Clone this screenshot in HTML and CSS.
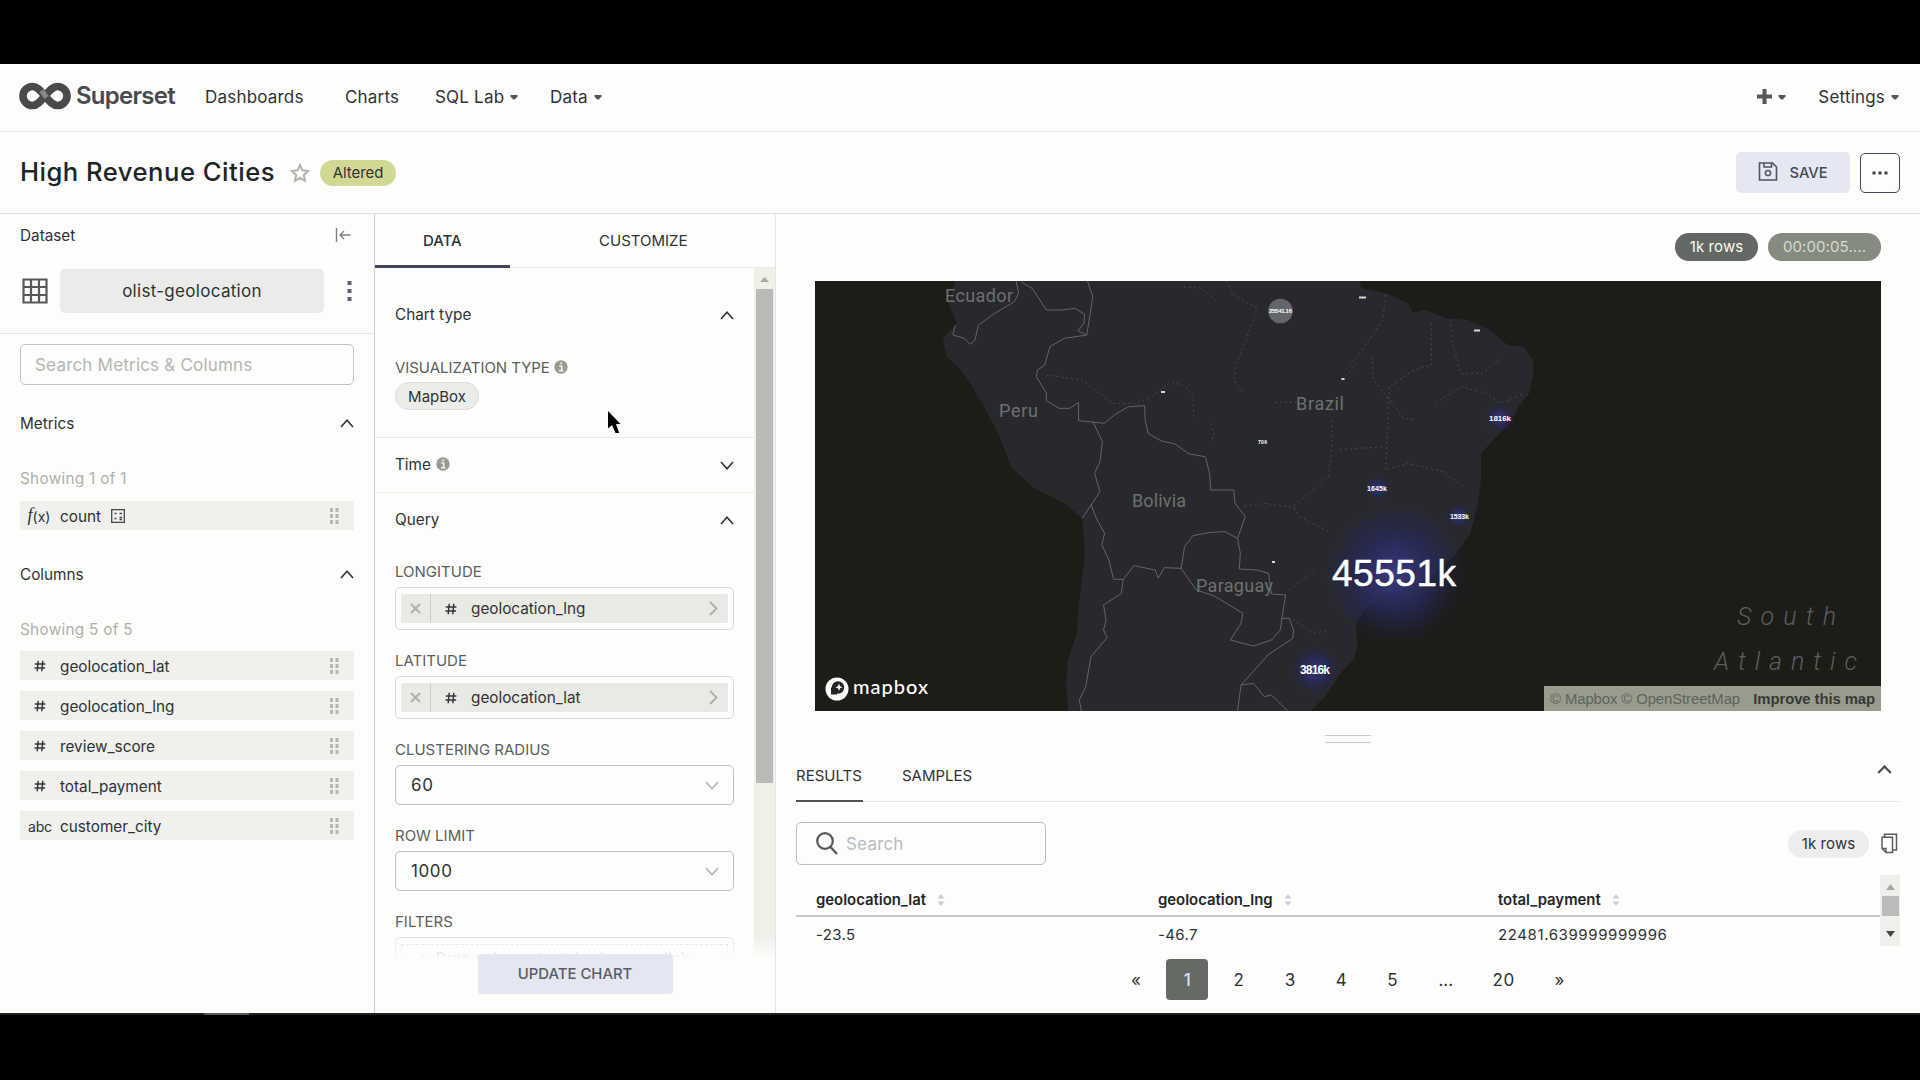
FILE: index.html
```html
<!DOCTYPE html>
<html lang="en">
<head>
<meta charset="utf-8">
<title>High Revenue Cities</title>
<link rel="stylesheet" href="styles.css">
</head>
<body>
<svg class="defs" width="0" height="0">
  <symbol id="up" viewBox="0 0 14 9"><path d="M1 8 7 1.3 13 8" fill="none" stroke="currentColor" stroke-width="1.6"/></symbol>
  <symbol id="down" viewBox="0 0 14 9"><path d="M1 1 7 7.7 13 1" fill="none" stroke="currentColor" stroke-width="1.6"/></symbol>
  <symbol id="caret" viewBox="0 0 8 5"><path d="M.5 0h7v1.6L4.8 4.6H3.2L.5 1.6z" fill="currentColor"/></symbol>
  <symbol id="grip" viewBox="0 0 9 16"><path d="M0 0h3v4H0zM5.5 0h3v4h-3zM0 6h3v4H0zM5.5 6h3v4h-3zM0 12h3v4H0zM5.5 12h3v4h-3z" fill="#b3b8b0"/></symbol>
  <symbol id="info" viewBox="0 0 14 14"><circle cx="7" cy="7" r="6.7" fill="#969c8e"/><path d="M5.2 6h2.5v4.5M5 10.7h4.3M6.3 3.2h1.8" fill="none" stroke="#f4f5f2" stroke-width="1.5"/></symbol>
  <symbol id="hash" viewBox="0 0 12 12"><path d="M4.2.8 3.2 11.2M8.8.8 7.8 11.2M.8 3.9h10.6M.5 8h10.6" fill="none" stroke="#33363a" stroke-width="1.5"/></symbol>
  <symbol id="sort" viewBox="0 0 8 12"><path d="M4 0 7.5 4.5h-7zM4 12 .5 7.5h7z" fill="#c9ccd4"/></symbol>
</svg>
<div class="app">
  <nav class="nav">
    <a class="brand">
      <svg width="52" height="28" viewBox="0 0 52 28"><path d="M26 14C21 8 18 4.5 13.500 4.500a9.500 9.500 0 0 0 0 19C18 23.500 21 20 26 14S34 4.500 38.500 4.500a9.500 9.500 0 0 1 0 19C34 23.500 31 20 26 14z" fill="none" stroke="#484a4c" stroke-width="7.600"/><path d="M22.500 8.500 27.500 15.500" stroke="#85878a" stroke-width="5"/></svg>
      <span class="brand-name">Superset</span>
    </a>
    <span class="nav-item dash">Dashboards</span>
    <span class="nav-item charts">Charts</span>
    <span class="nav-item sql">SQL Lab <svg width="8" height="5"><use href="#caret"/></svg></span>
    <span class="nav-item data">Data <svg width="8" height="5"><use href="#caret"/></svg></span>
    <span class="nav-item plus"><svg class="cross" width="15" height="15" viewBox="0 0 15 15"><path d="M7.500 0v15M0 7.500h15" stroke="#56595c" stroke-width="4"/></svg><svg width="8" height="5"><use href="#caret"/></svg></span>
    <span class="nav-item settings">Settings <svg width="8" height="5"><use href="#caret"/></svg></span>
  </nav>
  <header class="title-bar">
    <h1>High Revenue Cities</h1>
    <svg class="star" width="20" height="20" viewBox="0 0 20 20"><path d="M10 2 12.400 7.300 18.200 8 13.900 11.900 15 17.800 10 14.900 5 17.800 6.100 11.900 1.800 8 7.600 7.300z" fill="none" stroke="#b0b5aa" stroke-width="2"/></svg>
    <span class="altered">Altered</span>
    <button class="save"><svg width="20" height="19" viewBox="0 0 20 19"><path d="M1.500 1h13l4 4v13h-17zM6 1v4h7.500V1" fill="none" stroke="#52555c" stroke-width="1.600"/><circle cx="10" cy="11" r="2.600" fill="none" stroke="#52555c" stroke-width="1.500"/></svg>SAVE</button>
    <button class="more"><svg width="16" height="4" viewBox="0 0 16 4"><path d="M.5.5h3v3h-3zM6.500.5h3v3h-3zM12.500.5h3v3h-3z" fill="#3d3f4c"/></svg></button>
  </header>
  <main class="work">
    <aside class="source">
      <div class="source-top">
        <div class="dataset-head"><span>Dataset</span><svg width="16" height="14" viewBox="0 0 16 14"><path d="M1.500 0v14M15.500 7H5M9 3 5 7l4 4" fill="none" stroke="#80828f" stroke-width="1.400"/></svg></div>
        <div class="dataset-row">
          <svg width="26" height="26" viewBox="0 0 26 26"><path d="M1.500 1.500h23v23h-23zM9 1v24M17 1v24M1 9h24M1 17h24" fill="none" stroke="#56595b" stroke-width="2.200"/></svg>
          <span class="dataset-name">olist-geolocation</span>
          <svg class="kebab" width="5" height="22" viewBox="0 0 5 22"><path d="M.5 1h4v4h-4zM.5 9h4v4h-4zM.5 17h4v4h-4z" fill="#5b5d6c"/></svg>
        </div>
      </div>
      <div class="source-search">Search Metrics &amp; Columns</div>
      <div class="fold">Metrics<svg width="14" height="9"><use href="#up"/></svg></div>
      <div class="showing">Showing 1 of 1</div>
      <ul class="fields one">
        <li><span class="kind fx"><i>f</i>(x)</span><span>count</span><svg class="calc" width="14" height="14" viewBox="0 0 14 14"><path d="M.7.7h12.600v12.600H.7z" fill="none" stroke="#44474a" stroke-width="1.300"/><path d="M3.500 4.500h2M8.500 4.500h2.500M3.500 9.500h2M8.500 8.500h2.500M8.500 10.500h2.500" stroke="#44474a" stroke-width="1.400"/></svg><svg class="grip" width="9" height="16"><use href="#grip"/></svg></li>
      </ul>
      <div class="fold second">Columns<svg width="14" height="9"><use href="#up"/></svg></div>
      <div class="showing">Showing 5 of 5</div>
      <ul class="fields">
        <li><span class="kind"><svg width="12" height="12"><use href="#hash"/></svg></span><span>geolocation_lat</span><svg class="grip" width="9" height="16"><use href="#grip"/></svg></li>
        <li><span class="kind"><svg width="12" height="12"><use href="#hash"/></svg></span><span>geolocation_lng</span><svg class="grip" width="9" height="16"><use href="#grip"/></svg></li>
        <li><span class="kind"><svg width="12" height="12"><use href="#hash"/></svg></span><span>review_score</span><svg class="grip" width="9" height="16"><use href="#grip"/></svg></li>
        <li><span class="kind"><svg width="12" height="12"><use href="#hash"/></svg></span><span>total_payment</span><svg class="grip" width="9" height="16"><use href="#grip"/></svg></li>
        <li><span class="kind abc">abc</span><span>customer_city</span><svg class="grip" width="9" height="16"><use href="#grip"/></svg></li>
      </ul>
    </aside>
    <section class="controls">
      <div class="tabs"><span class="tab active">DATA</span><span class="tab wide">CUSTOMIZE</span></div>
      <div class="scroller">
        <div class="panel">
          <div class="section first">
            <div class="section-head">Chart type<svg width="14" height="9"><use href="#up"/></svg></div>
            <label class="viz">VISUALIZATION TYPE<svg width="14" height="14"><use href="#info"/></svg></label>
            <span class="viz-pill">MapBox</span>
          </div>
          <div class="section time">
            <div class="section-head"><span>Time<svg class="tip" width="14" height="14"><use href="#info"/></svg></span><svg width="14" height="9"><use href="#down"/></svg></div>
          </div>
          <div class="section query">
            <div class="section-head">Query<svg width="14" height="9"><use href="#up"/></svg></div>
            <label class="long">LONGITUDE</label>
            <div class="drop"><div class="chip"><span class="x"><svg width="11" height="11" viewBox="0 0 11 11"><path d="M1 1l9 9M10 1 1 10" stroke="#adb2ab" stroke-width="2"/></svg></span><svg class="h" width="12" height="12"><use href="#hash"/></svg><span>geolocation_lng</span><svg class="go" width="9" height="15" viewBox="0 0 9 15"><path d="M1 1l6.500 6.500L1 14" fill="none" stroke="#adb2ab" stroke-width="2"/></svg></div></div>
            <label>LATITUDE</label>
            <div class="drop"><div class="chip"><span class="x"><svg width="11" height="11" viewBox="0 0 11 11"><path d="M1 1l9 9M10 1 1 10" stroke="#adb2ab" stroke-width="2"/></svg></span><svg class="h" width="12" height="12"><use href="#hash"/></svg><span>geolocation_lat</span><svg class="go" width="9" height="15" viewBox="0 0 9 15"><path d="M1 1l6.500 6.500L1 14" fill="none" stroke="#adb2ab" stroke-width="2"/></svg></div></div>
            <label>CLUSTERING RADIUS</label>
            <div class="select">60<svg width="14" height="9"><use href="#down"/></svg></div>
            <label>ROW LIMIT</label>
            <div class="select">1000<svg width="14" height="9"><use href="#down"/></svg></div>
            <label>FILTERS</label>
            <div class="drop filters"><div class="ghost">+&nbsp; Drop columns/metrics here or click</div></div>
          </div>
        </div>
        <div class="bar"><svg width="9" height="5" viewBox="0 0 9 5"><path d="M4.500 0 9 5H0z" fill="#a5aa9d"/></svg><span class="thumb"></span></div>
      </div>
      <footer class="run"><button>UPDATE CHART</button></footer>
    </section>
    <section class="chart">
      <div class="badges"><span class="rows">1k rows</span><span class="timer">00:00:05....</span></div>
      <div class="map">
        <svg class="terrain" viewBox="42 33 2985 1290" preserveAspectRatio="none">
          <path class="land" d="M435 33 415 100 440 160 400 205 410 260 450 300 480 345 520 420 560 500 590 590 650 650 740 700 790 745 798 850 790 930 780 1010 775 1090 750 1170 745 1240 750 1323H1430L1470 1280 1517 1205 1550 1170 1560 1130 1557 1060 1580 1020 1620 985 1690 960 1760 925 1830 860 1877 790 1897 710 1907 630 1907 550 1942 510 1987 460 2012 410 2042 370 2054 310 2052 270 2025 230 1982 225 1932 180 1872 150 1812 145 1752 120 1717 128 1702 100 1642 70 1572 55 1567 33z"/>
          <g class="state"><path d="M690 315 790 330 875 400 940 400 980 382 1040 335 1080 350 1102 380V450M1075 50l50 5 40 40M1195 33 1215 75 1280 115 1245 220 1220 290 1215 330 1240 370M1245 710 1300 700 1380 712 1400 740 1480 785M1150 460 1160 490 1150 520M1490 450V530L1480 620 1380 712M1330 397H1390M1560 280 1512 340M1512 540 1560 535 1640 530M1640 75 1632 150 1540 290M1602 260 1605 330 1660 400 1690 445 1720 448M1768 160V285L1720 300 1650 350 1640 600 1700 580 1800 605 1860 650M1820 150 1830 230 1850 310 1910 310 1960 265M1780 400 1850 350 1920 370 1960 400 2030 370M1440 900l-70 60M1380 1050 1440 1090 1480 1080"/></g>
          <path class="border" d="M605 33 612 70 600 95 545 130 500 165 490 210 477 223 460 205 428 195 435 165M620 36 650 55 690 120 730 120 770 115 797 133 795 160 778 182 803 195 820 80 805 33M803 195 740 205 700 230 685 285 665 300 662 320 690 370 690 392 725 415 755 415 780 398V452L852 460 880 435 920 410 965 407 967 455 975 490 1010 512 1050 522 1090 552 1135 560 1147 610 1150 660H1215L1218 700 1247 740 1225 805 1190 785 1150 787 1100 797 1077 830 1067 895 1020 893 1003 925 995 900 935 887 905 928H878L865 870 845 825 853 790 830 745 815 705 790 745M815 705 840 665 825 610 840 575 847 515 820 455M905 928 900 970 850 1005 857 1050 850 1080 860 1103 815 1160 800 1250 782 1290 788 1323M1067 895 1110 960 1160 978 1240 1030 1235 1060 1205 1110 1270 1128 1320 1110 1345 1080 1350 1040 1360 975 1320 972 1312 910 1280 900 1230 897 1233 850 1225 805M1350 1045 1370 1045 1382 1080 1380 1105 1310 1155 1235 1245 1225 1323M1235 1245 1270 1240 1300 1280 1320 1275 1366 1323"/>
        </svg>
        <svg class="marks" viewBox="0 0 1066 430">
          <defs>
            <radialGradient id="glow"><stop offset="0" stop-color="#3a3d86" stop-opacity=".9"/><stop offset=".45" stop-color="#2a2c66" stop-opacity=".75"/><stop offset="1" stop-color="#20214e" stop-opacity="0"/></radialGradient>
          </defs>
          <circle cx="580" cy="293" r="72" fill="url(#glow)"/>
          <circle cx="500" cy="389" r="24" fill="url(#glow)"/>
          <circle cx="685" cy="137" r="15" fill="url(#glow)"/>
          <circle cx="562" cy="207" r="13" fill="url(#glow)"/>
          <circle cx="644" cy="235" r="13" fill="url(#glow)"/>
          <circle cx="465.500" cy="30" r="12.300" fill="#63666a"/>
          <g class="place">
            <text x="130" y="21" textLength="68">Ecuador</text>
            <text x="184" y="136" textLength="39">Peru</text>
            <text x="481" y="128.500" textLength="48">Brazil</text>
            <text x="317" y="225.500" textLength="54">Bolivia</text>
            <text x="381" y="310.500" textLength="77">Paraguay</text>
          </g>
          <g class="sea">
            <text x="922" y="344" textLength="99">South</text>
            <text x="899" y="389" textLength="143">Atlantic</text>
          </g>
          <g class="count">
            <text x="517" y="304.500" font-size="37" textLength="124" stroke="#fff" stroke-width=".5">45551k</text>
            <text x="485" y="393" font-size="12" font-weight="700" textLength="30">3816k</text>
            <text x="674" y="140" font-size="8" font-weight="700" textLength="22">1816k</text>
            <text x="552" y="210" font-size="7" font-weight="700" textLength="20">1645k</text>
            <text x="635" y="238" font-size="7" font-weight="700" textLength="19">1533k</text>
            <text x="454" y="32" font-size="6" font-weight="700" textLength="23">25541.16</text>
            <text x="443" y="162.500" font-size="5" font-weight="700" textLength="9">706</text>
          </g>
          <path d="M346 111h4M526.500 98h3M457 281h3M544 16.500h7M659 49.500h6" stroke="#d5d8cf" stroke-width="2"/>
          <circle cx="22" cy="408" r="11.500" fill="#fff"/><circle cx="23" cy="406.500" r="6.200" fill="#23241f"/><path d="M16 413.500v-7h6v7z" fill="#23241f"/><path d="M24 402.500l1 2.700 2.700 1-2.700 1-1 2.700-1-2.700-2.700-1 2.700-1z" fill="#fff"/>
          <text class="wordmark" x="38" y="413" textLength="75">mapbox</text>
        </svg>
        <div class="credit"><span>© Mapbox</span><span>© OpenStreetMap</span><b>Improve this map</b></div>
      </div>
      <div class="handle"></div>
      <div class="results">
        <div class="result-tabs"><span class="rtab active">RESULTS</span><span class="rtab">SAMPLES</span><svg width="15" height="9" viewBox="0 0 15 9"><path d="M1.200 8 7.500 1.500 13.800 8" fill="none" stroke="#4b4e50" stroke-width="2.200"/></svg></div>
        <div class="tools">
          <div class="find"><svg width="22" height="23" viewBox="0 0 22 23"><circle cx="9" cy="9" r="7.800" fill="none" stroke="#56595b" stroke-width="2.200"/><path d="M14.500 15 21 22" stroke="#56595b" stroke-width="2.400"/></svg>Search</div>
          <span class="count-pill">1k rows</span>
          <svg class="copy" width="17" height="21" viewBox="0 0 17 21"><path d="M1 4.200h10.500V19.500H5L1 15.500zM1 15.500H5v4M3.500 4V1.200H15.500V17H12" fill="none" stroke="#5a5d5f" stroke-width="1.500"/></svg>
        </div>
        <div class="grid">
          <div class="rows-area">
            <div class="tr th"><span>geolocation_lat<svg width="8" height="12"><use href="#sort"/></svg></span><span>geolocation_lng<svg width="8" height="12"><use href="#sort"/></svg></span><span>total_payment<svg width="8" height="12"><use href="#sort"/></svg></span></div>
            <div class="tr td"><span>-23.5</span><span>-46.7</span><span class="money">22481.639999999996</span></div>
          </div>
          <div class="mini-bar"><svg width="9" height="6" viewBox="0 0 9 6"><path d="M4.500 0 9 6H0z" fill="#a5aa9d"/></svg><span></span><svg width="9" height="6" viewBox="0 0 9 6"><path d="M0 0h9L4.500 6z" fill="#44474a"/></svg></div>
        </div>
        <div class="pager"><span class="arrow">«</span><span class="on">1</span><span>2</span><span>3</span><span>4</span><span>5</span><span class="dots">...</span><span class="last">20</span><span class="arrow">»</span></div>
      </div>
    </section>
  </main>
</div>
<div class="status"><span></span></div>
<svg class="cursor" width="14" height="24" viewBox="0 0 14 24"><path d="M0 0v17.500l4-3.500 3.500 8h3.700L8 13h4.500z" fill="#000"/></svg>
</body>
</html>
```
FILE: styles.css
```css
* { box-sizing: border-box; }
body { margin: 0; background: #000; width: 1920px; height: 1080px; overflow: hidden; font-family: Inter, "Liberation Sans", sans-serif; font-size: 15.3px; color: #2f3235; padding-top: 64px; }
svg { flex: none; display: block; }
.defs { position: absolute; }
button { font: inherit; color: inherit; border: 0; padding: 0; }
ul { list-style: none; margin: 0; padding: 0; }
.app { height: 949px; background: #fdfdfb; display: flex; flex-direction: column; }

.nav { height: 68px; border-bottom: 1px solid #e6e7ec; display: flex; align-items: center; padding: 0 21px 2px 19px; font-size: 17px; letter-spacing: .2px; flex: none; }
.brand { display: flex; align-items: center; width: 186px; gap: 5px; }
.brand svg { margin-top: -2px; }
.brand-name { font-weight: 600; font-size: 24px; letter-spacing: -.75px; color: #484a4d; margin-top: -2px; }
.nav-item { display: flex; align-items: center; gap: 6px; color: #2f3235; }
.nav-item svg { color: #56595c; margin-top: 2px; }
.nav-item svg.cross { margin-top: 0; }
.dash { width: 140px; }
.charts { width: 90px; }
.sql { width: 115px; }
.plus { margin-left: auto; margin-right: 32px; }

.title-bar { height: 82px; border-bottom: 1px solid #e0e1e8; display: flex; align-items: center; padding: 0 20px; flex: none; }
h1 { margin: 0; font-size: 25.6px; font-weight: 500; width: 270px; letter-spacing: .5px; color: #202327; white-space: nowrap; padding-bottom: 2px; }
.star { margin-right: 10px; }
.altered { background: #d3d794; height: 26px; line-height: 26px; border-radius: 13px; width: 76px; text-align: center; font-size: 14.9px; }
.save { margin-left: auto; width: 114px; height: 41px; background: #e5e7f2; border-radius: 5px; display: flex; align-items: center; justify-content: center; gap: 11px; font-size: 14.7px; font-weight: 500; color: #464957; }
.save svg { margin-top: -2px; }
.more { width: 40px; height: 40px; margin-left: 10px; border: 1.5px solid #45475a; border-radius: 5px; background: none; display: grid; place-items: center; }

.work { flex: 1; display: flex; min-height: 0; }
.source { width: 375px; border-right: 1px solid #cbced4; flex: none; }
.source-top { height: 120px; border-bottom: 1px solid #e3e4ea; padding: 11px 0 0 20px; }
.dataset-head { display: flex; align-items: center; justify-content: space-between; height: 20px; padding-right: 23px; }
.dataset-row { display: flex; align-items: center; margin: 24px 22px 0 2px; height: 44px; }
.dataset-name { width: 264px; height: 44px; line-height: 44px; margin-left: 12px; background: #ebecea; border-radius: 5px; text-align: center; font-size: 17px; letter-spacing: .3px; }
.kebab { margin-left: auto; }
.source-search { margin: 10px 20px 0; height: 41px; line-height: 40px; border: 1px solid #c0c4c8; border-radius: 5px; padding-left: 14px; font-size: 17px; letter-spacing: .2px; color: #b3b8b2; }
.fold { margin: 23px 20px 0 20px; height: 30px; display: flex; align-items: center; justify-content: space-between; }
.fold.second { margin-top: 30px; }
.showing { margin: 31px 0 0 20px; height: 20px; line-height: 20px; color: #adb2a9; letter-spacing: .3px; }
.fields { margin: 11px 20px 0 20px; display: flex; flex-direction: column; gap: 11px; }
.fields.one { margin-top: 12px; }
.fields li { height: 29px; background: #f0f0ed; display: flex; align-items: center; padding: 1px 15px 0 0; }
.fields.one + .fold { margin-top: 29px; }
.kind { width: 40px; display: flex; justify-content: center; }
.fx { font-size: 14px; padding-right: 2px; }
.fx i { font: italic 18px/14px "Liberation Serif", serif; }
.abc { font-size: 14px; letter-spacing: -.2px; }
.calc { margin-left: 10px; }
.grip { margin-left: auto; }

.controls { width: 401px; border-right: 1px solid #e4e5ea; display: flex; flex-direction: column; flex: none; }
.tabs { height: 54px; border-bottom: 1px solid #e8e9ef; display: flex; flex: none; }
.tab { width: 135px; text-align: center; line-height: 53px; height: 54px; font-size: 15px; }
.tab.active { border-bottom: 3px solid #43455a; font-weight: 500; }
.tab.wide { width: 266px; padding-left: 2px; }
.scroller { flex: 1; display: flex; position: relative; overflow: hidden; min-height: 0; }
.scroller::after { content: ""; position: absolute; left: 0; right: 0; bottom: 0; height: 26px; background: linear-gradient(rgba(253,253,251,0), #fdfdfb); }
.panel { width: 379px; height: 0; }
.section { padding: 0 20px; border-bottom: 1px solid #e8e9ef; }
.section-head { display: flex; align-items: center; justify-content: space-between; height: 30px; }
.section-head span { display: flex; align-items: center; gap: 5px; }
.section .section-head > svg { margin-top: 2px; }
.first { padding-top: 31px; height: 170px; }
.time { height: 55px; padding-top: 11px; border-color: #eeefdc; }
.query { padding-top: 11px; }
label { display: flex; align-items: center; height: 20px; margin-top: 21px; padding-bottom: 1px; color: #5b5e5f; font-size: 15px; gap: 4px; }
label.viz { margin-top: 28px; padding: 0; letter-spacing: -.05px; }
label.long { margin-top: 28px; }
.viz-pill { display: block; margin-top: 5px; width: 84px; height: 28px; line-height: 27px; border: 1px solid #d9dbd9; border-radius: 14px; background: #ecede8; text-align: center; font-size: 15px; }
.drop { margin-top: 5px; height: 43px; width: 339px; border: 1px solid #d7d9dd; border-radius: 5px; padding: 6px 5px; }
.chip { height: 29px; background: #e9eae4; border-radius: 2px; display: flex; align-items: center; padding-right: 10px; }
.x { width: 30px; height: 29px; border-right: 1px solid #c9ccc9; display: grid; place-items: center; }
.h { margin: 0 14px 0 14px; }
.go { margin-left: auto; }
.select { margin-top: 5px; height: 40px; width: 339px; border: 1px solid #b9bdc4; border-radius: 5px; display: flex; align-items: center; justify-content: space-between; padding: 0 14px 0 15px; font-size: 17px; letter-spacing: .6px; }
.select svg { color: #b0b4b8; }
.filters { height: 60px; border-color: #dcdde4; }
.ghost { border: 1px dashed #d8dae2; height: 30px; line-height: 28px; color: #a9acae; padding-left: 15px; }
.bar { width: 21px; background: #f0f0e9; display: flex; flex-direction: column; align-items: center; padding-top: 9px; }
.thumb { width: 17px; height: 494px; margin-top: 7px; background: #b8bcb4; }
.run { height: 53px; flex: none; display: flex; justify-content: center; position: relative; }
.run button { width: 195px; height: 40px; margin-top: -6px; background: #e4e6f1; border-radius: 4px; font-weight: 500; color: #5a5d63; font-size: 14.9px; }

.chart { flex: 1; display: flex; flex-direction: column; min-width: 0; }
.badges { height: 67px; display: flex; justify-content: flex-end; align-items: center; gap: 10px; padding: 0 39px 1px 0; flex: none; }
.badges span { height: 28px; line-height: 28px; border-radius: 14px; text-align: center; font-size: 15px; letter-spacing: .1px; }
.badges .rows { width: 83px; background: #646864; color: #fbfbe8; }
.badges .timer { width: 113px; background: #868b80; color: #d8dacb; }
.map { position: relative; margin: 0 39px; height: 430px; background: #1c1d17; flex: none; overflow: hidden; }
.terrain, .marks { position: absolute; left: 0; top: 0; width: 1066px; height: 430px; }
.land { fill: #28292e; }
.border, .state path { fill: none; vector-effect: non-scaling-stroke; stroke-linejoin: round; }
.border { stroke: #636562; stroke-width: 1; }
.state path { stroke: #474945; stroke-width: 1; stroke-dasharray: 2 3; }
.place { font: 400 18px Roboto, sans-serif; fill: #6e706f; }
.sea { font: italic 300 25px Roboto, sans-serif; fill: #5b5e60; }
.count { font-family: "Liberation Sans", sans-serif; fill: #fff; }
.wordmark { font: 500 20px Lato, sans-serif; fill: #fff; }
.credit { position: absolute; right: 0; bottom: 0; width: 337px; height: 25px; line-height: 26px; padding: 0 6px; display: flex; gap: 4px; background: #989c8d; color: #5f635f; font-family: "Liberation Sans", sans-serif; font-size: 14.9px; white-space: nowrap; letter-spacing: -.1px; }
.credit b { color: #373936; margin-left: auto; }
.handle { width: 46px; height: 8px; border: solid #c8cbd0; border-width: 1px 0; margin: 24px auto 0; flex: none; }
.results { padding: 0 20px; }
.result-tabs { margin-top: 8px; height: 51px; border-bottom: 1px solid #e6e7ef; display: flex; align-items: flex-start; font-size: 15px; }
.rtab { height: 51px; line-height: 49px; margin-right: 39px; }
.rtab.active { border-bottom: 2px solid #505354; width: 67px; }
.result-tabs svg { margin: 14px 8px 0 auto; }
.tools { margin-top: 20px; height: 43px; display: flex; align-items: center; }
.find { width: 250px; height: 43px; border: 1px solid #b9bdc6; border-radius: 5px; display: flex; align-items: center; padding-left: 19px; gap: 8px; font-size: 17px; letter-spacing: .2px; color: #b8bcc0; }
.count-pill { margin-left: auto; width: 81px; height: 28px; line-height: 28px; border-radius: 14px; background: #ededeb; text-align: center; font-size: 15px; letter-spacing: .1px; }
.copy { margin-left: 12px; margin-right: 2px; }
.grid { margin-top: 10px; height: 71px; display: flex; }
.rows-area { flex: 1; }
.tr { display: grid; grid-template-columns: 342px 340px 1fr; padding-left: 20px; }
.tr span { display: flex; align-items: center; gap: 11px; }
.th { height: 42px; padding-top: 9px; border-bottom: 2px solid #c6cacd; font-weight: 600; font-size: 14.9px; color: #222529; }
.td { height: 35px; font-size: 15px; letter-spacing: .35px; }
.td .money { letter-spacing: .6px; }
.mini-bar { width: 20px; background: #f0f0eb; display: flex; flex-direction: column; align-items: center; padding: 9px 0; }
.mini-bar span { width: 17px; height: 21px; background: #b9bdb9; margin: 6px 0 15px; }
.pager { height: 41px; margin-top: 13px; display: flex; align-items: center; padding-left: 319px; font-size: 17px; }
.pager span { width: 42px; margin-right: 9.300px; text-align: center; line-height: 42px; height: 41px; }
.pager .on { background: #666a64; color: #dcdff0; border-radius: 4px; font-weight: 500; }
.pager .dots { width: 46px; }
.pager .last { width: 51px; letter-spacing: .5px; }
.pager .arrow:last-child { width: 42px; }

.status { height: 2px; background: #1e1f24; padding-left: 204px; }
.status span { display: block; width: 45px; height: 2px; background: #55575a; }
.cursor { position: absolute; left: 608px; top: 411px; }
```
